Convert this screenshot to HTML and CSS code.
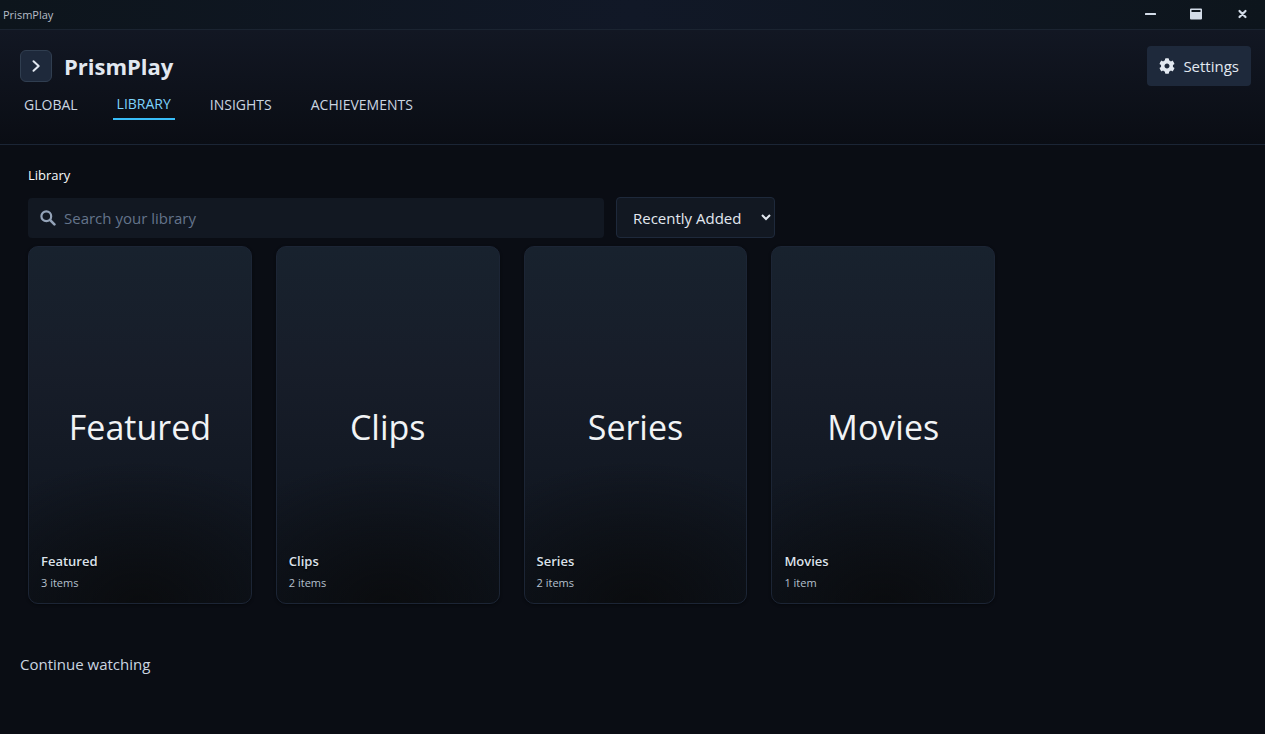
FILE: index.html
```
<!DOCTYPE html>
<html lang="en">
<head>
<meta charset="utf-8">
<meta name="viewport" content="width=device-width, initial-scale=1">
<title>PrismPlay</title>
<link rel="stylesheet" href="styles.css">
</head>
<body>
<div class="titlebar">
  <span class="titlebar-name">PrismPlay</span>
  <div class="window-controls">
    <button class="window-button" type="button" aria-label="Minimize">
      <svg width="12" height="12" viewBox="0 0 12 12"><rect x="1" y="5" width="11" height="2" rx="0.5" fill="currentColor"/></svg>
    </button>
    <button class="window-button" type="button" aria-label="Maximize">
      <svg width="12" height="12" viewBox="0 0 12 12"><path fill="currentColor" fill-rule="evenodd" d="M1 .5h10a1 1 0 0 1 1 1v9a1 1 0 0 1-1 1H1a1 1 0 0 1-1-1v-9a1 1 0 0 1 1-1zM1.500 2v2h9V2z"/></svg>
    </button>
    <button class="window-button" type="button" aria-label="Close">
      <svg width="12" height="12" viewBox="0 0 12 12"><path d="M3.500 3l6 6M9.500 3l-6 6" stroke="currentColor" stroke-width="2.200" stroke-linecap="round"/></svg>
    </button>
  </div>
</div>

<header class="header">
  <div class="header-row">
    <div class="brand">
      <button class="menu-button" type="button" aria-label="Open sidebar">
        <svg width="16" height="16" viewBox="0 0 16 16"><path d="M5.500 3.200L10.700 8l-5.200 4.800" fill="none" stroke="currentColor" stroke-width="2" stroke-linecap="round" stroke-linejoin="round"/></svg>
      </button>
      <h1 class="brand-name">PrismPlay</h1>
    </div>
    <button class="settings-button" type="button">
      <svg width="16" height="16" viewBox="0 0 512 512"><path fill="currentColor" d="M487.400 315.700l-42.600-24.600c4.300-23.200 4.300-47 0-70.200l42.600-24.600c4.900-2.800 7.100-8.600 5.500-14-11.100-35.600-30-67.800-54.700-94.600-3.800-4.100-10-5.100-14.800-2.300L380.800 110c-17.900-15.400-38.500-27.300-60.800-35.100V25.800c0-5.600-3.900-10.500-9.400-11.700-36.700-8.200-74.300-7.800-109.200 0-5.500 1.200-9.400 6.100-9.400 11.700V75c-22.200 7.900-42.800 19.800-60.800 35.100L88.700 85.500c-4.900-2.800-11-1.900-14.800 2.300-24.700 26.700-43.600 58.900-54.700 94.600-1.700 5.400.6 11.200 5.500 14L67.300 221c-4.300 23.200-4.300 47 0 70.200l-42.600 24.600c-4.900 2.800-7.100 8.600-5.500 14 11.100 35.600 30 67.800 54.700 94.600 3.800 4.100 10 5.100 14.800 2.300l42.600-24.600c17.900 15.400 38.500 27.300 60.800 35.100v49.200c0 5.600 3.900 10.500 9.400 11.700 36.700 8.200 74.300 7.800 109.200 0 5.500-1.200 9.400-6.100 9.400-11.700v-49.200c22.200-7.900 42.800-19.800 60.800-35.100l42.600 24.600c4.900 2.800 11 1.900 14.800-2.300 24.700-26.700 43.600-58.900 54.700-94.600 1.500-5.500-.7-11.300-5.600-14.100zM256 336c-44.100 0-80-35.900-80-80s35.900-80 80-80 80 35.900 80 80-35.900 80-80 80z"/></svg>
      <span>Settings</span>
    </button>
  </div>
  <nav class="tabs">
    <a class="tab" href="#global">GLOBAL</a>
    <a class="tab tab-active" href="#library" aria-current="page">LIBRARY</a>
    <a class="tab" href="#insights">INSIGHTS</a>
    <a class="tab" href="#achievements">ACHIEVEMENTS</a>
  </nav>
</header>

<main class="main">
  <section class="library">
    <h2 class="library-title">Library</h2>
    <div class="filters">
      <label class="search">
        <svg width="16" height="16" viewBox="0 0 16 16"><circle cx="6.300" cy="6.300" r="4.900" fill="none" stroke="currentColor" stroke-width="2.200"/><path d="M10.200 10.200l4.200 4.200" stroke="currentColor" stroke-width="2.600" stroke-linecap="round"/></svg>
        <input class="search-input" type="text" placeholder="Search your library" aria-label="Search your library">
      </label>
      <select class="sort" aria-label="Sort by">
        <option>Recently Added</option>
        <option>Title</option>
      </select>
    </div>
    <div class="cards">
      <a class="card" href="#featured">
        <span class="card-cover">Featured</span>
        <span class="card-info"><strong class="card-title">Featured</strong><span class="card-count">3 items</span></span>
      </a>
      <a class="card" href="#clips">
        <span class="card-cover">Clips</span>
        <span class="card-info"><strong class="card-title">Clips</strong><span class="card-count">2 items</span></span>
      </a>
      <a class="card" href="#series">
        <span class="card-cover">Series</span>
        <span class="card-info"><strong class="card-title">Series</strong><span class="card-count">2 items</span></span>
      </a>
      <a class="card" href="#movies">
        <span class="card-cover">Movies</span>
        <span class="card-info"><strong class="card-title">Movies</strong><span class="card-count">1 item</span></span>
      </a>
    </div>
  </section>
  <h2 class="continue-title">Continue watching</h2>
</main>
</body>
</html>
```
FILE: styles.css
```
* {
  box-sizing: border-box;
}

body {
  margin: 0;
  min-height: 100vh;
  background: #0a0d14;
  color: #e2e8f0;
  font-family: "Segoe UI", "Open Sans", "Noto Sans", sans-serif;
  font-size: 15px;
  line-height: 24px;
}

button,
input,
select {
  font: inherit;
  color: inherit;
}

a {
  color: inherit;
  text-decoration: none;
}

svg {
  display: block;
  flex: none;
}

.titlebar {
  display: flex;
  align-items: center;
  justify-content: space-between;
  height: 30px;
  padding-left: 3px;
  border-bottom: 1px solid #1b2431;
  background: linear-gradient(90deg, #0d151c, #111827 50%, #0d151c);
}

.titlebar-name {
  font-size: 11px;
  color: #b6bdc8;
}

.window-controls {
  display: flex;
  align-self: stretch;
  color: #d3dce8;
}

.window-button {
  display: flex;
  align-items: center;
  justify-content: center;
  width: 46px;
  padding: 0 0 2px;
  border: 0;
  background: none;
}

.header {
  padding: 16px 14px 24px 20px;
  border-bottom: 1px solid #1b2535;
  background: linear-gradient(#121723, #0a0d14);
}

.header-row,
.brand {
  display: flex;
  align-items: center;
}

.header-row {
  justify-content: space-between;
}

.brand {
  gap: 12px;
}

.menu-button {
  display: flex;
  align-items: center;
  justify-content: center;
  width: 32px;
  height: 32px;
  padding: 0;
  border: 1px solid #303e50;
  border-radius: 6px;
  background: #1e293b;
}

.brand-name {
  margin: 0;
  font-size: 22px;
  line-height: 32px;
  font-weight: 700;
}

.settings-button {
  display: flex;
  align-items: center;
  gap: 8px;
  height: 40px;
  padding: 0 12px;
  border: 0;
  border-radius: 4px;
  background: #1e293b;
}

.tabs {
  display: flex;
  align-items: flex-end;
  gap: 31px;
}

.tab {
  padding: 6px 4px 2px;
  font-size: 14px;
  line-height: 26px;
  color: #cbd5e1;
}

.tab-active {
  line-height: 24px;
  border-bottom: 2px solid #38bdf8;
  color: #7dd3fc;
}

.main {
  padding: 20px 14px 20px 20px;
}

.library {
  padding: 0 8px;
}

.library-title {
  margin: 0 0 12px;
  font-size: 13px;
  line-height: 20px;
  font-weight: 500;
  color: #f8fafc;
}

.filters {
  display: flex;
  align-items: flex-end;
  gap: 12px;
  margin-bottom: 8px;
}

.search {
  display: flex;
  align-items: center;
  gap: 8px;
  flex: 0 1 576px;
  height: 40px;
  padding: 0 12px;
  border-radius: 4px;
  background: #121822;
  color: #94a3b8;
}

.search-input {
  flex: 1;
  min-width: 0;
  padding: 0;
  border: 0;
  outline: 0;
  background: none;
  color: #e2e8f0;
}

.search-input::placeholder {
  color: #64748b;
}

.sort {
  width: 159px;
  height: 41px;
  padding: 0 0 0 12px;
  border: 1px solid #1e293b;
  border-radius: 4px;
  background: #121822;
}

.cards {
  display: grid;
  grid-template-columns: repeat(auto-fill, minmax(200px, 1fr));
  gap: 24px;
}

.card {
  display: grid;
  aspect-ratio: 5 / 8;
  border: 1px solid #1c2535;
  border-radius: 10px;
  background:
    radial-gradient(90% 40% at 50% 100%, #0a0b0ddd, #0a0b0d00),
    linear-gradient(#18222e, #171d29 35%, #0d131c);
  box-shadow: 0 1px 3px #0006;
}

.card-cover,
.card-info {
  grid-area: 1 / 1;
}

.card-cover {
  place-self: center;
  padding-top: 4px;
  font-size: 34px;
  line-height: 40px;
  color: #f1f3f5;
}

.card-info {
  display: flex;
  flex-direction: column;
  align-self: end;
  padding: 12px;
}

.card-title {
  font-size: 13px;
  line-height: 28px;
  font-weight: 600;
  text-shadow: 0 1px 2px #000;
  color: #dbe1ea;
}

.card-count {
  font-size: 11px;
  line-height: 16px;
  color: #b5c0ce;
}

.continue-title {
  margin: 48px 0 0;
  font-size: 15px;
  line-height: 24px;
  font-weight: 400;
  color: #cbd5e1;
}
```
